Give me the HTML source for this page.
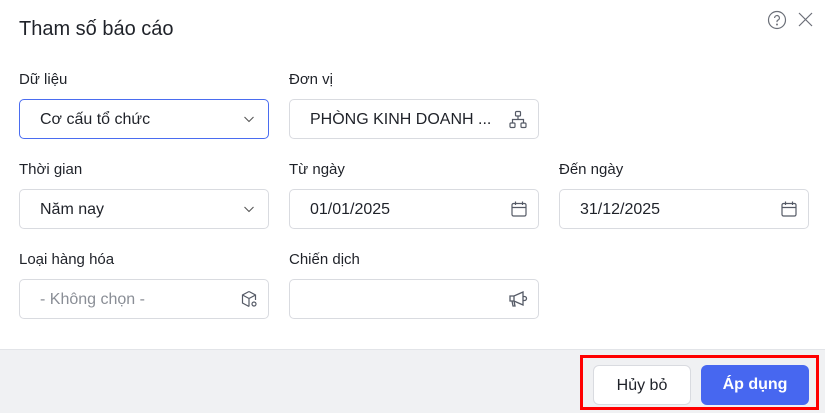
<!DOCTYPE html>
<html><head><meta charset="utf-8"><style>
*{box-sizing:border-box;margin:0;padding:0}
body{width:825px;height:413px;background:#fff;font-family:"Liberation Sans",sans-serif;position:relative;overflow:hidden;color:#1f2229}
.t{position:absolute;left:19px;top:18px;font-size:20px;color:#1f2229}
.l{position:absolute;font-size:15px;color:#1f2229}
.i{position:absolute;width:250px;height:40px;border:1px solid #d9dbe0;border-radius:5px;font-size:16px;padding:0 0 0 20px;line-height:39px;color:#1f2229}
.i svg{position:absolute;right:10px;top:10px}
.foot{position:absolute;left:0;top:349px;width:825px;height:64px;background:#f0f1f3;border-top:1px solid #e2e4e8}
.red{position:absolute;left:580px;top:355px;width:239px;height:55px;border:3px solid #f00}
.b{position:absolute;top:365px;height:40px;border-radius:6px;font-size:16px;text-align:center;line-height:39px}
</style></head><body>
<div class="t">Tham số báo cáo</div>
<svg style="position:absolute;left:767px;top:10px" width="20" height="20" viewBox="0 0 20 20" fill="none" stroke="#6b6f78" stroke-width="1.2"><circle cx="10" cy="10" r="8.5"/><path d="M7.6 8a2.4 2.4 0 1 1 3.2 2.2c-.6.3-.8.7-.8 1.3v.6"/><circle cx="10" cy="14.5" r=".4" fill="#6b6f78"/></svg>
<svg style="position:absolute;left:798px;top:12px" width="15" height="15" viewBox="0 0 15 15" stroke="#6b6f78" stroke-width="1.2"><path d="M1 1L14 14M14 1L1 14"/></svg>

<div class="l" style="left:19px;top:71px">Dữ liệu</div>
<div class="l" style="left:289px;top:71px">Đơn vị</div>
<div class="i" style="left:19px;top:99px;border-color:#4a6cf0">Cơ cấu tổ chức<svg width="18" height="18" viewBox="0 0 18 18" fill="none" stroke="#555" stroke-width="1.1"><path d="M4.5 7l4.5 4.5 4.5-4.5"/></svg></div>
<div class="i" style="left:289px;top:99px">PHÒNG KINH DOANH ...<svg width="20" height="20" viewBox="0 0 20 20" fill="none" stroke="#555a66" stroke-width="1.2"><rect x="7.5" y="1.5" width="5" height="4.5" rx="1"/><path d="M10 6v3M4.5 13v-3.5h11V13"/><rect x="2" y="13" width="5" height="4.5" rx="1"/><rect x="13" y="13" width="5" height="4.5" rx="1"/></svg></div>

<div class="l" style="left:19px;top:161px">Thời gian</div>
<div class="l" style="left:289px;top:161px">Từ ngày</div>
<div class="l" style="left:559px;top:161px">Đến ngày</div>
<div class="i" style="left:19px;top:189px">Năm nay<svg width="18" height="18" viewBox="0 0 18 18" fill="none" stroke="#555" stroke-width="1.1"><path d="M4.5 7l4.5 4.5 4.5-4.5"/></svg></div>
<div class="i" style="left:289px;top:189px">01/01/2025<svg width="18" height="18" viewBox="0 0 18 18" fill="none" stroke="#555a66" stroke-width="1.2"><rect x="2" y="3.5" width="14" height="12.5" rx="1.5"/><path d="M2 7.5h14M5.5 1.5v3.5M12.5 1.5v3.5"/></svg></div>
<div class="i" style="left:559px;top:189px">31/12/2025<svg width="18" height="18" viewBox="0 0 18 18" fill="none" stroke="#555a66" stroke-width="1.2"><rect x="2" y="3.5" width="14" height="12.5" rx="1.5"/><path d="M2 7.5h14M5.5 1.5v3.5M12.5 1.5v3.5"/></svg></div>

<div class="l" style="left:19px;top:251px">Loại hàng hóa</div>
<div class="l" style="left:289px;top:251px">Chiến dịch</div>
<div class="i" style="left:19px;top:279px;color:#8a8e96">- Không chọn -<svg width="18" height="18" viewBox="0 0 18 18" fill="none" stroke="#555a66" stroke-width="1.2"><path d="M9 1.5l6.5 3.5v5M9 1.5L2.5 5v8L9 16.5M2.5 5L9 8.5 15.5 5M9 8.5v8"/><circle cx="14" cy="14" r="2"/></svg></div>
<div class="i" style="left:289px;top:279px"><svg width="20" height="18" viewBox="0 0 20 18" fill="none" stroke="#555a66" stroke-width="1.3"><path d="M2 6h4l9-4v13l-9-4H2zM6 6v5M4 11l1 5h2l-1-5M15 6.5h1.5a2 2 0 0 1 0 4H15"/></svg></div>

<div class="foot"></div>
<div class="red"></div>
<div class="b" style="left:593px;width:98px;background:#fff;border:1px solid #d9dbe0;color:#1f2229">Hủy bỏ</div>
<div class="b" style="left:701px;width:108px;background:#4767f0;color:#fff;font-weight:bold">Áp dụng</div>
</body></html>
